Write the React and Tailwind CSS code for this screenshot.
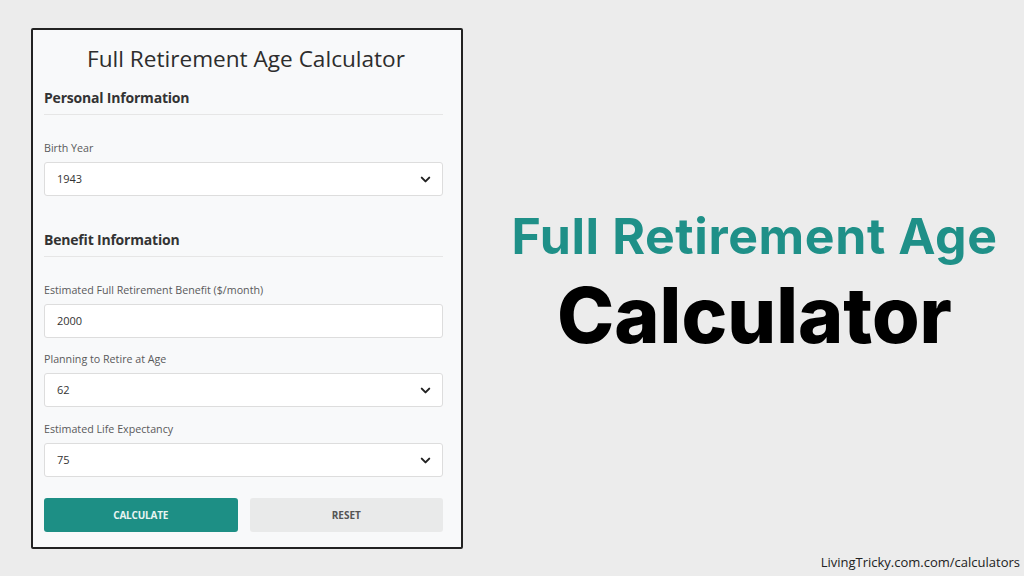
import { ChevronDown } from "lucide-react";

function Field({ label, value, select }) {
  return (
    <div className="flex flex-col">
      <label className="text-[10.7px] leading-[14px] text-[#5a5a5a] mb-[7px]">{label}</label>
      <div className="h-[34px] bg-white border border-[#ddd] rounded-[3px] flex items-center justify-between pl-[12px] pr-[9px]">
        <span className="text-[11px] text-[#333]">{value}</span>
        {select && <ChevronDown size={15} strokeWidth={3.2} className="text-[#222]" />}
      </div>
    </div>
  );
}

function Section({ title }) {
  return (
    <div className="border-b border-[#e6e6e6] pb-[6px]">
      <h2 className="text-[14px] leading-[20px] font-bold text-[#333] tracking-[-0.2px]">{title}</h2>
    </div>
  );
}

export default function App() {
  return (
    <div className="w-[1024px] h-[576px] bg-[#ececec] flex flex-col pt-[28px] font-['Open_Sans',sans-serif] overflow-hidden">
      <div className="flex h-[521px]">
        <div className="ml-[31px] w-[432px] h-[521px] border-2 border-[#222] rounded-[2px] bg-[#f8f9fa] pl-[11px] pr-[18px] pt-[11px] flex flex-col">
          <h1 className="text-[22.6px] leading-[36px] text-[#2d2d2d] text-center pl-[5px]">Full Retirement Age Calculator</h1>
          <div className="mt-[11px]"><Section title="Personal Information" /></div>
          <div className="mt-[26px]"><Field label="Birth Year" value="1943" select /></div>
          <div className="mt-[34px]"><Section title="Benefit Information" /></div>
          <div className="mt-[26px]"><Field label="Estimated Full Retirement Benefit ($/month)" value="2000" /></div>
          <div className="mt-[14px]"><Field label="Planning to Retire at Age" value="62" select /></div>
          <div className="mt-[15px]"><Field label="Estimated Life Expectancy" value="75" select /></div>
          <div className="mt-[21px] flex gap-[12px]">
            <button className="flex-1 h-[34px] bg-[#1d8f85] rounded-[3px] text-[10px] font-bold text-[#e8f4f2] uppercase tracking-[-0.2px]">Calculate</button>
            <button className="flex-1 h-[34px] bg-[#e9eaea] rounded-[3px] text-[10px] font-bold text-[#555] uppercase">Reset</button>
          </div>
        </div>
        <div className="flex-1 ml-[22px] flex flex-col items-center justify-center pb-[10px]">
          <div className="font-['Inter',sans-serif] font-bold text-[#1f9088] text-[50px] leading-[58px] tracking-[0.6px]">Full Retirement Age</div>
          <div className="font-['Inter',sans-serif] font-extrabold text-black text-[77px] leading-[92px] mt-[4px]">Calculator</div>
        </div>
      </div>
      <div className="text-right pr-[4px] mt-[4px] text-[13px] leading-[18px] text-[#222]">LivingTricky.com.com/calculators</div>
    </div>
  );
}
